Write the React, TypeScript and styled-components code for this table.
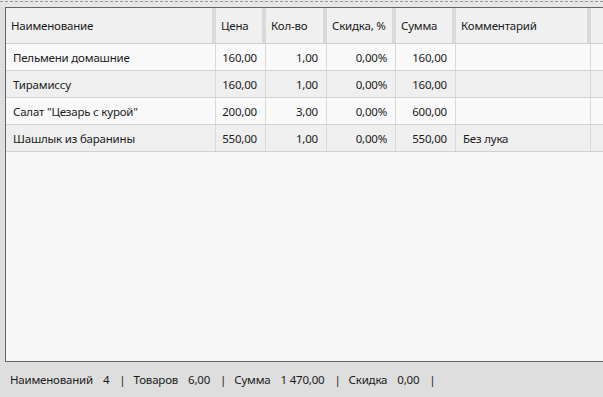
import React from "react";
import styled, { createGlobalStyle } from "styled-components";

const Global = createGlobalStyle`
  html, body { margin: 0; padding: 0; }
  body {
    background: #dedede;
    font-family: "Noto Sans", "Open Sans", sans-serif;
    font-size: 11.5px;
    letter-spacing: -0.2px;
    color: #1b1b1b;
  }
`;

const Page = styled.div`
  width: 603px;
  height: 397px;
  display: flex;
  flex-direction: column;
  overflow: hidden;
  background: #dedede;
`;

const TopStrip = styled.div`
  height: 7px;
  padding-top: 1px;
  box-sizing: border-box;
  background: #e6e6e6;
`;

const Dashes = styled.div`
  height: 0;
  border-top: 1px dashed #9a9a9a;
`;

const GridPanel = styled.div`
  margin-left: 5px;
  height: 355px;
  box-sizing: border-box;
  border-left: 1px solid #646464;
  border-top: 1px solid #646464;
  border-bottom: 1px solid #646464;
  background: #f7f7f7;
  display: flex;
  flex-direction: column;
`;

const HeaderRow = styled.div`
  display: flex;
  height: 36px;
  box-sizing: border-box;
  background: #f0f0f0;
  border-bottom: 1px solid #cdcdcd;
`;

const HeaderCell = styled.div<{ $w?: number }>`
  ${(p) => (p.$w ? `width: ${p.$w}px; flex: none;` : "flex: 1;")}
  box-sizing: border-box;
  border-right: ${(p) => (p.$w ? "4px solid #d9d9d9" : "none")};
  padding-left: 5px;
  display: flex;
  align-items: center;
  white-space: nowrap;
  overflow: hidden;
`;

const Row = styled.div<{ $alt: boolean }>`
  display: flex;
  height: 27px;
  box-sizing: border-box;
  background: ${(p) => (p.$alt ? "#efefef" : "#f9f9f9")};
  border-bottom: 1px solid #d2d2d2;
`;

const Cell = styled.div<{ $w?: number; $num?: boolean }>`
  ${(p) => (p.$w ? `width: ${p.$w}px; flex: none;` : "flex: 1;")}
  box-sizing: border-box;
  border-right: ${(p) => (p.$w ? "1px solid #d9d9d9" : "none")};
  padding: ${(p) => (p.$num ? "0 8px 0 0" : "0 0 0 7px")};
  display: flex;
  align-items: center;
  justify-content: ${(p) => (p.$num ? "flex-end" : "flex-start")};
  white-space: nowrap;
  overflow: hidden;
`;

const StatusBar = styled.div`
  flex: 1;
  display: flex;
  align-items: center;
  gap: 8px;
  padding-left: 10px;
  padding-bottom: 1px;
  white-space: nowrap;
`;

const StatusGroup = styled.span`
  display: inline-flex;
  gap: 10px;
`;

const Pipe = styled.span`
  color: #1b1b1b;
  margin-left: 2px;
`;

const widths = [210, 50, 61, 69, 60, 135];
const headers = ["Наименование", "Цена", "Кол-во", "Скидка, %", "Сумма", "Комментарий"];
const numeric = [false, true, true, true, true, false];

const rows = [
  ["Пельмени домашние", "160,00", "1,00", "0,00%", "160,00", ""],
  ["Тирамиссу", "160,00", "1,00", "0,00%", "160,00", ""],
  ["Салат \"Цезарь с курой\"", "200,00", "3,00", "0,00%", "600,00", ""],
  ["Шашлык из баранины", "550,00", "1,00", "0,00%", "550,00", "Без лука"],
];

const summary: [string, string][] = [
  ["Наименований", "4"],
  ["Товаров", "6,00"],
  ["Сумма", "1 470,00"],
  ["Скидка", "0,00"],
];

export default function App() {
  return (
    <Page>
      <Global />
      <TopStrip>
        <Dashes />
      </TopStrip>
      <GridPanel>
        <HeaderRow>
          {headers.map((h, i) => (
            <HeaderCell key={h} $w={widths[i]}>
              {h}
            </HeaderCell>
          ))}
          <HeaderCell />
        </HeaderRow>
        {rows.map((r, ri) => (
          <Row key={ri} $alt={ri % 2 === 1}>
            {r.map((v, ci) => (
              <Cell key={ci} $w={widths[ci]} $num={numeric[ci]}>
                {v}
              </Cell>
            ))}
            <Cell />
          </Row>
        ))}
      </GridPanel>
      <StatusBar>
        {summary.map(([l, v]) => (
          <React.Fragment key={l}>
            <StatusGroup>
              <span>{l}</span>
              <span>{v}</span>
            </StatusGroup>
            <Pipe>|</Pipe>
          </React.Fragment>
        ))}
      </StatusBar>
    </Page>
  );
}
